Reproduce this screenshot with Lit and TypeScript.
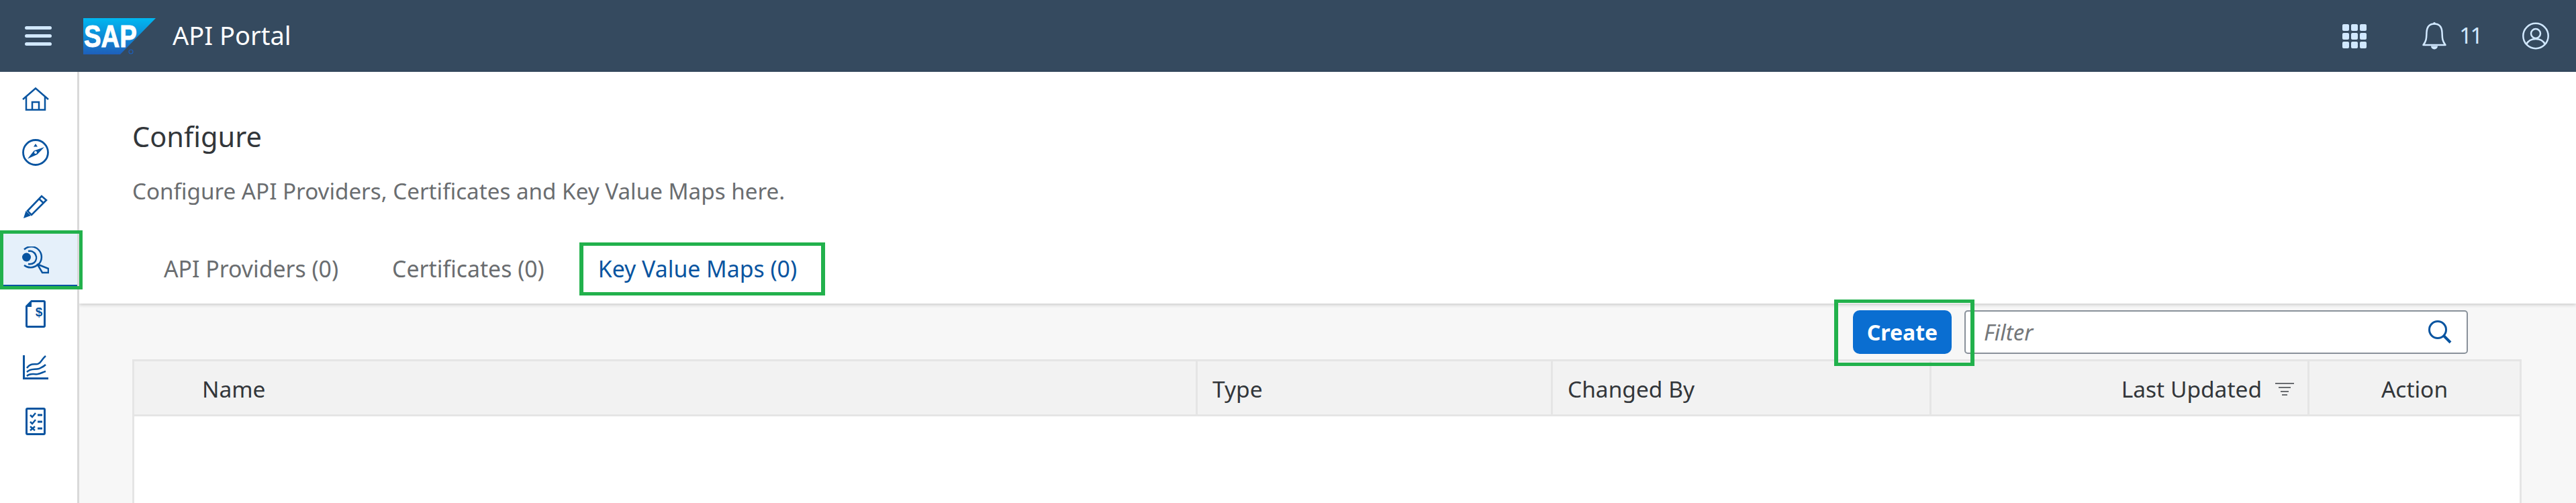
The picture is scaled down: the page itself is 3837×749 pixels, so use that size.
import {LitElement, html, css, svg} from 'lit';
import {customElement} from 'lit/decorators.js';

const navIcons = [
  {
    w: 40, h: 35,
    body: svg`<path d="M1 18 20 1.5 39 18" fill="none" stroke-width="2.5"/><path d="M6 14V33.5H34V14M15 33.5V22H25V33.5" fill="none" stroke-width="2.5"/>`,
  },
  {
    w: 40, h: 40,
    body: svg`<circle cx="20" cy="20" r="18.5" fill="none" stroke-width="2.8"/><path d="M33 12 22.5 23 8 29.5 17.5 17.5Z" stroke="none" fill="currentColor"/><circle cx="20" cy="20" r="2" fill="#fff" stroke="none"/><path d="M20 7 23 11.5H17Z" stroke="none" fill="currentColor"/>`,
  },
  {
    w: 36, h: 36,
    body: svg`<path d="M6 25 27 3 34 9 12 31Z" fill="none" stroke-width="2.6"/><path d="M23 7 30 13.5" fill="none" stroke-width="2.6"/><path d="M0 36 3.5 25 11 32Z" stroke="none" fill="currentColor"/>`,
  },
  {
    w: 40, h: 41,
    body: svg`<circle cx="6.5" cy="16" r="6.5" stroke="none" fill="currentColor"/><path d="M3 4.5A15 15 0 0 1 24 27L39 33V39H30L23 27A15 15 0 0 1 3 28" fill="none" stroke-width="2.5"/><path d="M9 7A10 10 0 0 1 18 24 11 11 0 0 1 9 26" fill="none" stroke-width="2.5"/>`,
  },
  {
    w: 30, h: 41,
    body: svg`<path d="M9 1.5H27A1.5 1.5 0 0 1 28.5 3V38A1.5 1.5 0 0 1 27 39.5H3A1.5 1.5 0 0 1 1.5 38V9Z" fill="none" stroke-width="3"/><path d="M1 10 9 1V10Z" stroke="none" fill="currentColor"/><text x="20" y="24" font-size="19" font-weight="700" text-anchor="middle" fill="currentColor" stroke="none" font-family="Liberation Sans, sans-serif">$</text>`,
  },
  {
    w: 38, h: 36,
    body: svg`<path d="M1.5 0V34.5H38" fill="none" stroke-width="3"/><path d="M6 19C11 12 15 14 22 13 27 12 28 6 34 1M6 25C12 19 18 22 24 20 28 18 31 17 34 14M6 31C11 26 16 29 22 28 27 27 30 25 34 24" fill="none" stroke-width="2.5"/>`,
  },
  {
    w: 30, h: 41,
    body: svg`<rect x="1.5" y="1.5" width="27" height="38" rx="1.5" fill="none" stroke-width="3"/><path d="M7 11 10 14 15 8M7 21 10 24 15 18" fill="none" stroke-width="2.5"/><path d="M7 28 14 34M14 28 7 34" fill="none" stroke-width="2.5"/><path d="M18 11H25M18 21H25M18 31H25" fill="none" stroke-width="3"/>`,
  },
];

const SELECTED_NAV = 3;

@customElement('app-root')
class AppRoot extends LitElement {
  static override styles = css`
    :host {
      display: flex;
      flex-direction: column;
      height: 749px;
      overflow: hidden;
      background: #f7f7f7;
      font-family: 'Noto Sans', sans-serif;
      color: #32363a;
    }

    svg {
      display: block;
    }

    .shell {
      display: flex;
      align-items: center;
      flex: none;
      height: 107px;
      background: #354a5f;
      padding: 0 40px 0 37px;
      color: #d1e8ff;
    }

    .shell__menu {
      display: flex;
      flex-direction: column;
      gap: 7px;
      width: 40px;
    }

    .shell__menu span {
      height: 5px;
      border-radius: 3px;
      background: currentColor;
    }

    .shell__logo {
      margin-left: 47px;
    }

    .shell__title {
      margin: 0 0 3px 25px;
      font-size: 38px;
      color: #fff;
    }

    .shell__apps {
      display: grid;
      grid-template-columns: repeat(3, 10px);
      gap: 3px;
      margin-left: auto;
    }

    .shell__apps span {
      height: 10px;
      border-radius: 2px;
      background: currentColor;
    }

    .shell__bell {
      margin-left: 83px;
    }

    .shell__count {
      margin: 0 0 3px 19px;
      font-size: 33px;
      letter-spacing: -2.5px;
    }

    .shell__user {
      margin-left: 61px;
    }

    .layout {
      display: flex;
      flex: 1;
      min-height: 0;
    }

    .nav {
      position: relative;
      z-index: 1;
      flex: none;
      width: 115px;
      border-right: 3px solid #d9d9d9;
      background: #fff;
      color: #0854a0;
    }

    .nav__item {
      position: relative;
      display: flex;
      align-items: center;
      justify-content: center;
      box-sizing: border-box;
      height: 80px;
      padding-right: 9px;
      stroke: currentColor;
    }

    .nav__item--on {
      background: #e5f0fa;
      box-shadow: inset 0 -3px 0 #0854a0;
    }

    .nav__item--on::after {
      content: '';
      position: absolute;
      top: -4px;
      left: 0;
      right: -8px;
      bottom: -4px;
      border: 5px solid #22b14c;
    }

    .main {
      display: flex;
      flex-direction: column;
      flex: 1;
      min-width: 0;
    }

    .head {
      position: relative;
      flex: none;
      box-sizing: border-box;
      height: 345px;
      padding: 68px 0 0 79px;
      background: #fff;
      box-shadow: 0 2px 5px rgba(0, 0, 0, 0.18);
    }

    .head__title {
      margin: 0;
      font-size: 41.5px;
      font-weight: 400;
      line-height: 56px;
    }

    .head__text {
      margin: 32px 0 0;
      font-size: 33.2px;
      line-height: 44px;
      color: #6a6d70;
    }

    .tabs {
      display: flex;
      gap: 80px;
      margin: 71px 0 0 47px;
      font-size: 33.8px;
      line-height: 44px;
      color: #6a6d70;
    }

    .tabs__item--on {
      position: relative;
      color: #0854a0;
    }

    .tabs__item--on::after {
      content: '';
      position: absolute;
      top: -17px;
      left: -28px;
      right: -42px;
      bottom: -18px;
      border: solid #22b14c;
      border-width: 5px 6px;
    }

    .work {
      display: flex;
      flex-direction: column;
      flex: 1;
      min-height: 0;
      padding: 10px 81px 0 79px;
    }

    .bar {
      display: flex;
      justify-content: flex-end;
      gap: 19px;
      flex: none;
      height: 65px;
      padding-right: 80px;
    }

    .create {
      position: relative;
      width: 147px;
      border-radius: 10px;
      background: #0a6ed1;
      color: #fff;
      font-size: 32px;
      font-weight: 700;
      line-height: 65px;
      text-align: center;
    }

    .create::after {
      content: '';
      position: absolute;
      top: -16px;
      left: -28px;
      right: -34px;
      bottom: -18px;
      border: solid #22b14c;
      border-width: 5px 6px;
    }

    .filter {
      display: flex;
      align-items: center;
      justify-content: space-between;
      box-sizing: border-box;
      width: 750px;
      padding: 0 22px 0 27px;
      border: 2px solid #89919a;
      border-radius: 5px;
      background: #fff;
      color: #74777a;
      font-size: 33px;
      font-style: italic;
    }

    .table {
      display: flex;
      flex-direction: column;
      flex: 1;
      margin-top: 8px;
      border: solid #e5e5e5;
      border-width: 3px 3px 0;
      background: #fff;
    }

    .table__head {
      display: grid;
      grid-template-columns: 1584px 529px 564px 563px 1fr;
      box-sizing: border-box;
      flex: none;
      height: 82px;
      border-bottom: 3px solid #e5e5e5;
      background: #f2f2f2;
      font-size: 33.5px;
    }

    .cell {
      display: flex;
      align-items: center;
      min-width: 0;
      padding: 3px 0 0 22px;
      border-right: 3px solid #e5e5e5;
      box-sizing: border-box;
    }

    .cell--name {
      padding-left: 101px;
    }

    .cell--updated {
      justify-content: flex-end;
      gap: 20px;
      padding: 3px 20px 0 0;
    }

    .cell--action {
      justify-content: center;
      padding: 3px 0 0;
      border-right: 0;
    }
  `;

  override render() {
    return html`
      <header class="shell">
        <div class="shell__menu"><span></span><span></span><span></span></div>
        <svg class="shell__logo" width="108" height="54" viewBox="0 0 108 54">
          <defs>
            <linearGradient id="sap" x1="0" y1="0" x2="0" y2="1">
              <stop offset="0" stop-color="#00b8f1" />
              <stop offset="1" stop-color="#1e5fbb" />
            </linearGradient>
          </defs>
          <path d="M0 0H108L55 54H0Z" fill="url(#sap)" />
          <text
            x="1"
            y="43"
            font-family="Liberation Sans, sans-serif"
            font-size="46"
            font-weight="700"
            fill="#fff"
            stroke="#fff"
            stroke-width="1"
            textLength="79"
            lengthAdjust="spacingAndGlyphs"
          >SAP</text>
          <circle cx="71" cy="50" r="3" fill="none" stroke="#1e5fbb" stroke-width="1.2" />
        </svg>
        <span class="shell__title">API Portal</span>
        <div class="shell__apps">
          ${Array.from({length: 9}, () => html`<span></span>`)}
        </div>
        <svg class="shell__bell" width="36" height="41" viewBox="0 0 36 41" fill="none" stroke="currentColor" stroke-width="2.5">
          <path d="M1.5 34C7 27 6 22 6.5 15 7 6 12 2.5 18 2.5S29 6 29.5 15C30 22 29 27 34.5 34Z" stroke-linejoin="round" />
          <circle cx="18" cy="1.8" r="1.8" fill="currentColor" stroke="none" />
          <path d="M13 35.5H23A5 5 0 0 1 13 35.5Z" fill="currentColor" stroke="none" />
        </svg>
        <span class="shell__count">11</span>
        <svg class="shell__user" width="40" height="41" viewBox="0 0 40 41" fill="none" stroke="currentColor" stroke-width="2.5">
          <circle cx="20" cy="20.5" r="18.7" />
          <circle cx="20" cy="17" r="7" />
          <path d="M6 33C9 27 14 25 20 25S31 27 34 33" />
        </svg>
      </header>
      <div class="layout">
        <nav class="nav">
          ${navIcons.map(
            (icon, i) => html`
              <div class="nav__item ${i === SELECTED_NAV ? 'nav__item--on' : ''}">
                <svg width=${icon.w} height=${icon.h} viewBox="0 0 ${icon.w} ${icon.h}">${icon.body}</svg>
              </div>
            `
          )}
        </nav>
        <main class="main">
          <section class="head">
            <h1 class="head__title">Configure</h1>
            <p class="head__text">Configure API Providers, Certificates and Key Value Maps here.</p>
            <div class="tabs">
              <span>API Providers (0)</span>
              <span>Certificates (0)</span>
              <span class="tabs__item--on">Key Value Maps (0)</span>
            </div>
          </section>
          <section class="work">
            <div class="bar">
              <div class="create">Create</div>
              <div class="filter">
                <span>Filter</span>
                <svg width="35" height="35" viewBox="0 0 35 35" fill="none" stroke="#0854a0">
                  <circle cx="14" cy="14" r="12.5" stroke-width="3" />
                  <path d="M23 23 33 33" stroke-width="4" />
                </svg>
              </div>
            </div>
            <div class="table">
              <div class="table__head">
                <div class="cell cell--name">Name</div>
                <div class="cell">Type</div>
                <div class="cell">Changed By</div>
                <div class="cell cell--updated">
                  Last Updated
                  <svg width="28" height="20" viewBox="0 0 28 20" fill="none" stroke="#6a6d70" stroke-width="2">
                    <path d="M0 2H28M5 8H23M8 14H20M10 19H18" />
                  </svg>
                </div>
                <div class="cell cell--action">Action</div>
              </div>
            </div>
          </section>
        </main>
      </div>
    `;
  }
}

declare global {
  interface HTMLElementTagNameMap {
    'app-root': AppRoot;
  }
}
